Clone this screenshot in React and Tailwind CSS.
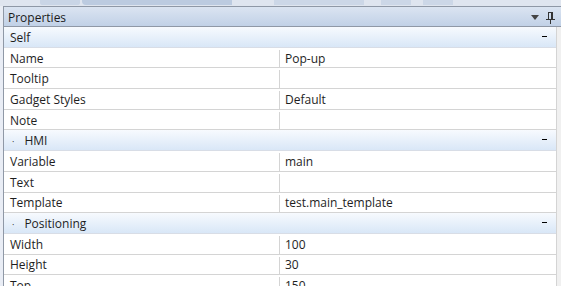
const sections = [
  {
    title: 'Self',
    dot: false,
    rows: [
      ['Name', 'Pop-up'],
      ['Tooltip', ''],
      ['Gadget Styles', 'Default'],
      ['Note', ''],
    ],
  },
  {
    title: 'HMI',
    dot: true,
    rows: [
      ['Variable', 'main'],
      ['Text', ''],
      ['Template', 'test.main_template'],
    ],
  },
  {
    title: 'Positioning',
    dot: true,
    rows: [
      ['Width', '100'],
      ['Height', '30'],
      ['Top', '150'],
    ],
  },
];

function PinIcon() {
  return (
    <svg width="9" height="12" viewBox="0 0 9 12">
      <rect x="2" y="0" width="5" height="1" fill="#333" />
      <rect x="2" y="0" width="1" height="7" fill="#333" />
      <rect x="5" y="0" width="2" height="7" fill="#333" />
      <rect x="0" y="7" width="9" height="1" fill="#333" />
      <rect x="4" y="8" width="1" height="4" fill="#333" />
    </svg>
  );
}

function Category({ title, dot }) {
  return (
    <div className="flex h-[20.7px] items-center border-b border-[#d8dde6] bg-gradient-to-b from-[#f7fafe] to-[#d9e7f7] pt-[2px] pr-[9px] pl-[6px] text-[#1e1e1e]">
      {dot && <span className="mr-[10px] ml-[2px] text-[9px] leading-none">·</span>}
      <span className="flex-1">{title}</span>
      <span className="mb-[3px] block h-[1px] w-[5px] bg-black" />
    </div>
  );
}

function Row({ name, value }) {
  return (
    <div className="flex h-[20.7px] border-b border-[#d4d4d4] bg-white pt-[2px] text-[#1e1e1e]">
      <div className="flex w-[276px] items-center border-r border-[#d4d4d4] pl-[6px]">{name}</div>
      <div className="flex flex-1 items-center pl-[5px]">{value}</div>
    </div>
  );
}

export default function App() {
  return (
    <div className="h-[286px] w-[561px] overflow-hidden bg-[#e9edf5] text-[12px] font-['Open_Sans',sans-serif]">
      {/* tab strip */}
      <div className="flex h-[6px] gap-[2px] bg-[#dfe5ef] pl-[40px]">
        <div className="h-[5px] w-[40px] rounded-b-[2px] bg-[#c9d5e6]" />
        <div className="h-[5px] w-[150px] rounded-bl-[4px] bg-[#bccbe0]" />
        <div className="ml-[40px] h-[5px] w-[90px] bg-[#ccd7e7]" />
        <div className="ml-[15px] h-[5px] w-[30px] bg-[#ccd7e7]" />
        <div className="ml-[10px] h-[5px] w-[30px] bg-[#ccd7e7]" />
      </div>
      <div className="ml-[3px] h-[280px] border-t border-l border-[#8f98a6]">
        <div className="flex h-[20px] items-center border-b border-[#8f98a6] bg-gradient-to-b from-[#dbe4f1] to-[#c1d1e7] pt-[2px] pr-[6px] pl-[4px] text-[#1b1b1b]">
          <span className="flex-1">Properties</span>
          <span className="mr-[7px] mb-[1px] block h-0 w-0 border-t-[5px] border-r-[4px] border-l-[4px] border-t-[#444] border-r-transparent border-l-transparent" />
          <PinIcon />
        </div>
        <div className="flex">
          <div className="w-[552px]">
            {sections.map(s => (
              <div key={s.title}>
                <Category title={s.title} dot={s.dot} />
                {s.rows.map(([n, v]) => (
                  <Row key={n} name={n} value={v} />
                ))}
              </div>
            ))}
          </div>
          <div className="flex-1 border-l border-[#d4d4d4] bg-[#f0f0f0]" />
        </div>
      </div>
    </div>
  );
}
